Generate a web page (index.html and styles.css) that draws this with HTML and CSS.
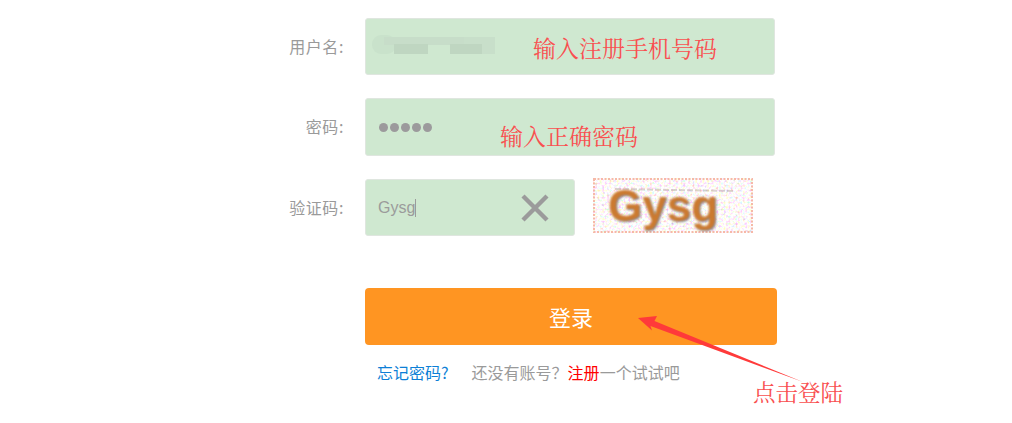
FILE: index.html
```html
<!DOCTYPE html>
<html lang="zh-CN">
<head>
<meta charset="utf-8">
<title>登录</title>
<link rel="stylesheet" href="styles.css">
</head>
<body>
<main class="page">
  <form class="form">
    <div class="row">
      <label class="label">用户名:</label>
      <div class="field field-wide">
        <div class="smudge">
          <span class="sm sm1"></span><span class="sm sm2"></span><span class="sm sm3"></span><span class="sm sm5"></span><span class="sm sm4"></span>
        </div>
      </div>
    </div>
    <div class="row">
      <label class="label label-pass">密码:</label>
      <div class="field field-wide field-pass">
        <div class="dots"><i></i><i></i><i></i><i></i><i></i></div>
      </div>
    </div>
    <div class="row">
      <label class="label">验证码:</label>
      <div class="field field-code">
        <span class="code-text">Gysg</span><span class="caret"></span>
        <svg class="clear" width="28" height="28" viewBox="0 0 28 28"><path d="M2 2 L26 26 M26 2 L2 26" stroke="#9b9b9b" stroke-width="4.4" fill="none"/></svg>
      </div>
      <div class="captcha">
        <svg class="noise" width="160" height="55" viewBox="0 0 160 55">
          <filter id="grain" x="0" y="0" width="100%" height="100%"><feTurbulence type="fractalNoise" baseFrequency="0.42" numOctaves="1" seed="7"/><feColorMatrix type="matrix" values="2 0 0 0 0.1  0 2 0 0 -0.02  0 0 2 0 -0.02  0 0 0 0 0.75"/></filter>
          <rect width="160" height="55" fill="#ffffff"/>
          <rect width="160" height="55" filter="url(#grain)"/>
          <rect x="1" y="1" width="158" height="53" fill="none" stroke="#f6b9a8" stroke-width="2" stroke-dasharray="2 1.5"/>
          <path d="M22 11 L142 13" stroke="#b8aaa2" stroke-width="2" stroke-dasharray="6 2" opacity=".5"/>
        </svg>
        <span class="captcha-text">Gysg</span>
      </div>
    </div>
    <button class="submit" type="button">登录</button>
    <p class="links">
      <a class="forgot">忘记密码?</a>
      <span class="hint">还没有账号&#xFF1F;<b class="reg">注册</b>一个试试吧</span>
    </p>
  </form>
  <span class="note note1">输入注册手机号码</span>
  <span class="note note2">输入正确密码</span>
  <span class="note note3">点击登陆</span>
  <svg class="arrow" width="1012" height="423" viewBox="0 0 1012 423"><polygon points="638,318 657,316 654.5,321 803,382 650.5,326 652,330.5" fill="#ff3a3a"/></svg>
</main>
</body>
</html>
```
FILE: styles.css
```css
* { box-sizing: border-box; }
html, body { margin: 0; background: #fff; }
.page {
  position: relative;
  width: 1012px;
  height: 423px;
  overflow: hidden;
  font-family: "Noto Sans CJK SC", "Liberation Sans", sans-serif;
}
.form { padding: 18px 0 0 0; display: flex; flex-direction: column; }
.row { display: flex; align-items: center; margin-bottom: 23px; }
.label {
  width: 344px;
  margin-right: 21px;
  padding-bottom: 1px;
  text-align: right;
  font-size: 16px;
  letter-spacing: 0.6px;
  color: #9a9a9a;
  white-space: nowrap;
}
.label-pass { padding-bottom: 3px; }
.field {
  position: relative;
  height: 57px;
  background: #cfe8d0;
  border: 1px solid #dfe6df;
  border-radius: 3px;
  display: flex;
  align-items: center;
}
.field-wide { width: 410px; }
.field-pass { height: 58px; }
.field-code { width: 210px; padding-left: 12px; }
.smudge { position: absolute; left: 6px; top: 15px; width: 124px; height: 21px; filter: blur(0.6px); }
.sm { position: absolute; display: block; background: #bfd6c1; }
.sm1 { left: 0; top: 1px; width: 24px; height: 19px; border-radius: 9px; background: #c9e2cb; }
.sm2 { left: 12px; top: 3px; width: 84px; height: 8px; background: #c7ddc9; }
.sm3 { left: 22px; top: 10px; width: 34px; height: 10px; }
.sm4 { left: 78px; top: 10px; width: 32px; height: 10px; }
.sm5 { left: 92px; top: 3px; width: 31px; height: 17px; background: #c8dfca; }
.dots { position: absolute; left: 13px; top: 24px; display: flex; gap: 2px; }
.dots i { display: block; width: 9px; height: 9px; border-radius: 50%; background: #9c9a9c; }
.code-text { font: 16px "Liberation Sans", sans-serif; color: #9b9b9b; }
.caret { width: 1px; height: 18px; background: #9b9b9b; }
.clear { position: absolute; left: 155px; top: 14px; }
.captcha {
  position: relative;
  width: 160px;
  height: 55px;
  margin: -4px 0 0 18px;
  overflow: hidden;
}
.noise { display: block; }
.captcha-text {
  position: absolute;
  left: 15px;
  top: 1px;
  font: bold 44px/54px "Liberation Sans", sans-serif;
  color: #cb7a30;
  filter: blur(0.9px);
  text-shadow: 1px 1px 1px #6f7a90;
}
.submit {
  display: block;
  margin: 29px 0 0 365px;
  width: 412px;
  height: 57px;
  padding: 0 0 2px 0;
  border: 0;
  border-radius: 4px;
  background: #ff9522;
  color: #fff;
  font: 22px "Noto Sans CJK SC", sans-serif;
}
.links {
  margin: 16px 0 0 377px;
  font-size: 16px;
  line-height: 22px;
  white-space: nowrap;
  display: flex;
  gap: 23px;
}
.forgot { color: #0d7fd6; }
.hint { color: #9a9a9a; }
.reg { color: #f00; font-weight: 400; }
.note {
  position: absolute;
  font-family: "Noto Serif CJK SC", "Noto Sans CJK SC", serif;
  font-size: 23px;
  line-height: 30px;
  color: #f95050;
  white-space: nowrap;
}
.note1 { left: 533px; top: 33px; }
.note2 { left: 500px; top: 121px; }
.note3 { left: 753px; top: 376px; font-size: 22.5px; }
.arrow { position: absolute; left: 0; top: 0; pointer-events: none; }
```
